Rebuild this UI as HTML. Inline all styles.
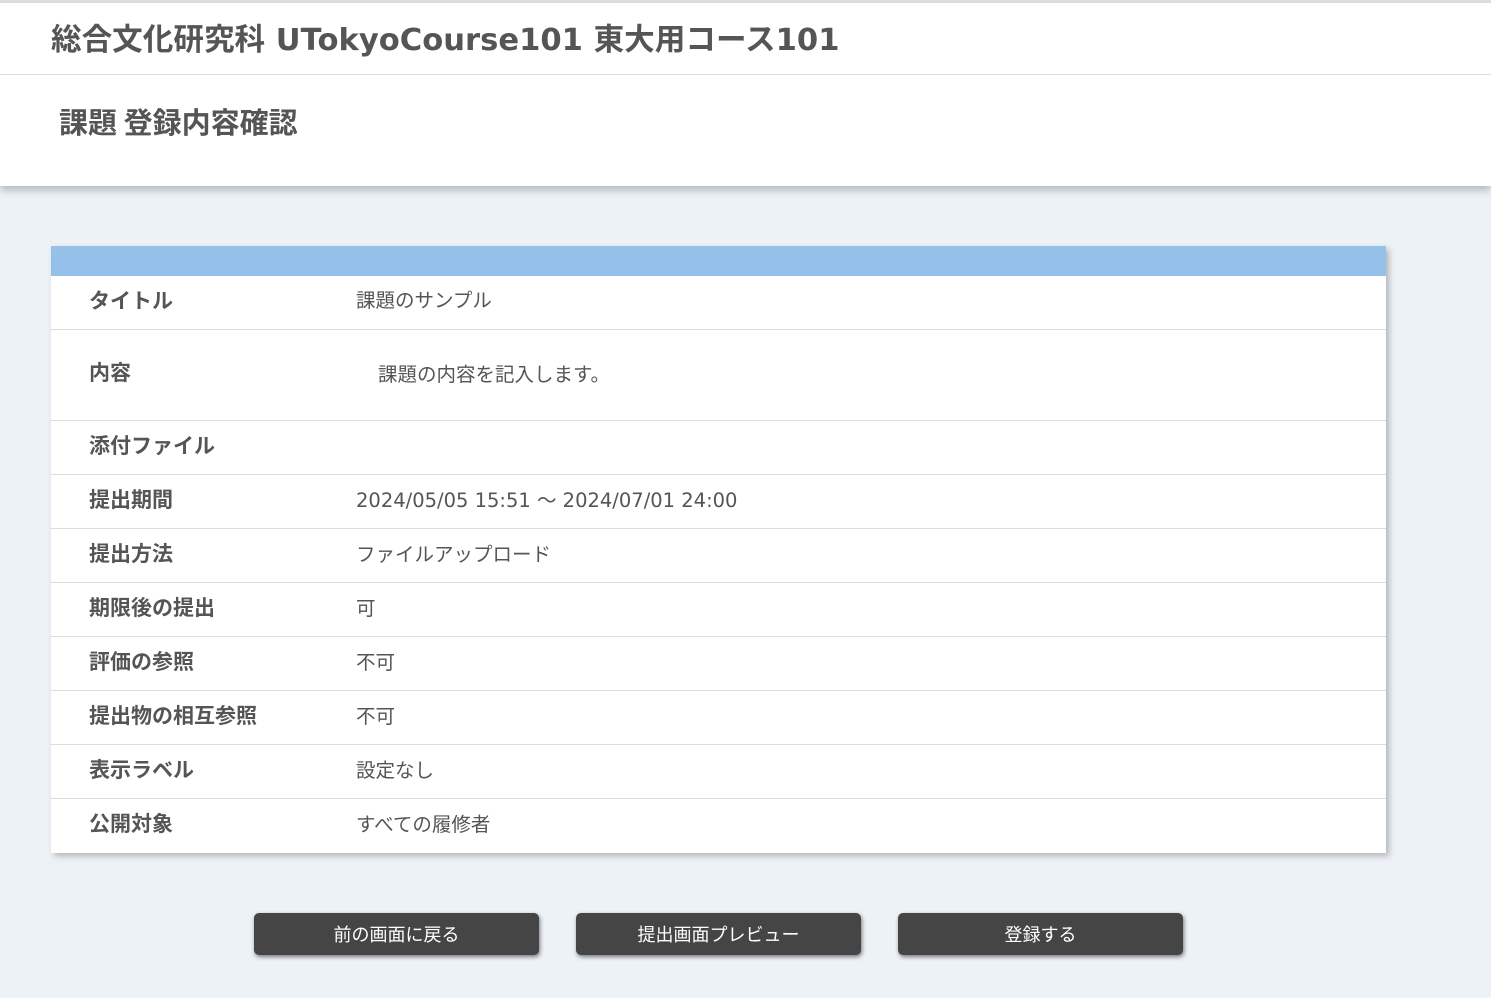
<!DOCTYPE html>
<html><head><meta charset="utf-8"><style>
*{margin:0;padding:0;box-sizing:border-box}
body{width:1491px;height:998px;background:#edf2f6;font-family:"DejaVu Sans","Noto Sans CJK JP",sans-serif;color:#555;overflow:hidden;position:relative}
.top{position:absolute;left:0;top:0;width:1491px;height:186px;background:#fff;border-top:3px solid #d9dedf;box-shadow:0 4px 8px rgba(0,0,0,.25)}
.h1{position:absolute;left:51px;top:12px;font-size:30.6px;font-weight:bold;color:#555;white-space:nowrap}
.div{position:absolute;left:0;top:71px;width:100%;height:1px;background:#ddd}
.h2{position:absolute;left:59px;top:97px;font-size:29px;font-weight:bold;color:#555;font-family:"Noto Sans CJK JP",sans-serif}
.tbl{position:absolute;left:51px;top:246px;width:1335px;background:#fff;box-shadow:3px 3px 6px rgba(0,0,0,.25)}
.hd{height:30px;background:#94c0e9}
.row{height:54px;border-bottom:1px solid #ddd;position:relative}
.row:last-child{border-bottom:none}
.l{position:absolute;left:38px;top:9px;font-size:21px;font-weight:bold;color:#555;font-family:"Noto Sans CJK JP",sans-serif}
.v{position:absolute;left:305px;top:9px;font-size:19.5px;color:#555}
.btn{position:absolute;top:913px;width:285px;height:42px;background:#454545;border-radius:5px;color:#fff;font-size:18px;text-align:center;line-height:42px;box-shadow:1px 2px 4px rgba(0,0,0,.5);font-family:"Noto Sans CJK JP",sans-serif}
</style></head><body>
<div class="top">
<div class="h1">総合文化研究科 UTokyoCourse101 東大用コース101</div>
<div class="div"></div>
<div class="h2">課題 登録内容確認</div>
</div>
<div class="tbl">
<div class="hd"></div>
<div class="row"><div class="l">タイトル</div><div class="v" style="top:8px">課題のサンプル</div></div>
<div class="row" style="height:91px"><div class="l" style="top:27px">内容</div><div class="v" style="left:327px;top:28px">課題の内容を記入します。</div></div>
<div class="row"><div class="l">添付ファイル</div></div>
<div class="row"><div class="l">提出期間</div><div class="v">2024/05/05 15:51 ～ 2024/07/01 24:00</div></div>
<div class="row"><div class="l">提出方法</div><div class="v">ファイルアップロード</div></div>
<div class="row"><div class="l">期限後の提出</div><div class="v">可</div></div>
<div class="row"><div class="l">評価の参照</div><div class="v">不可</div></div>
<div class="row"><div class="l">提出物の相互参照</div><div class="v">不可</div></div>
<div class="row"><div class="l">表示ラベル</div><div class="v">設定なし</div></div>
<div class="row"><div class="l">公開対象</div><div class="v">すべての履修者</div></div>
</div>
<div class="btn" style="left:254px">前の画面に戻る</div>
<div class="btn" style="left:576px">提出画面プレビュー</div>
<div class="btn" style="left:898px">登録する</div>
</body></html>
